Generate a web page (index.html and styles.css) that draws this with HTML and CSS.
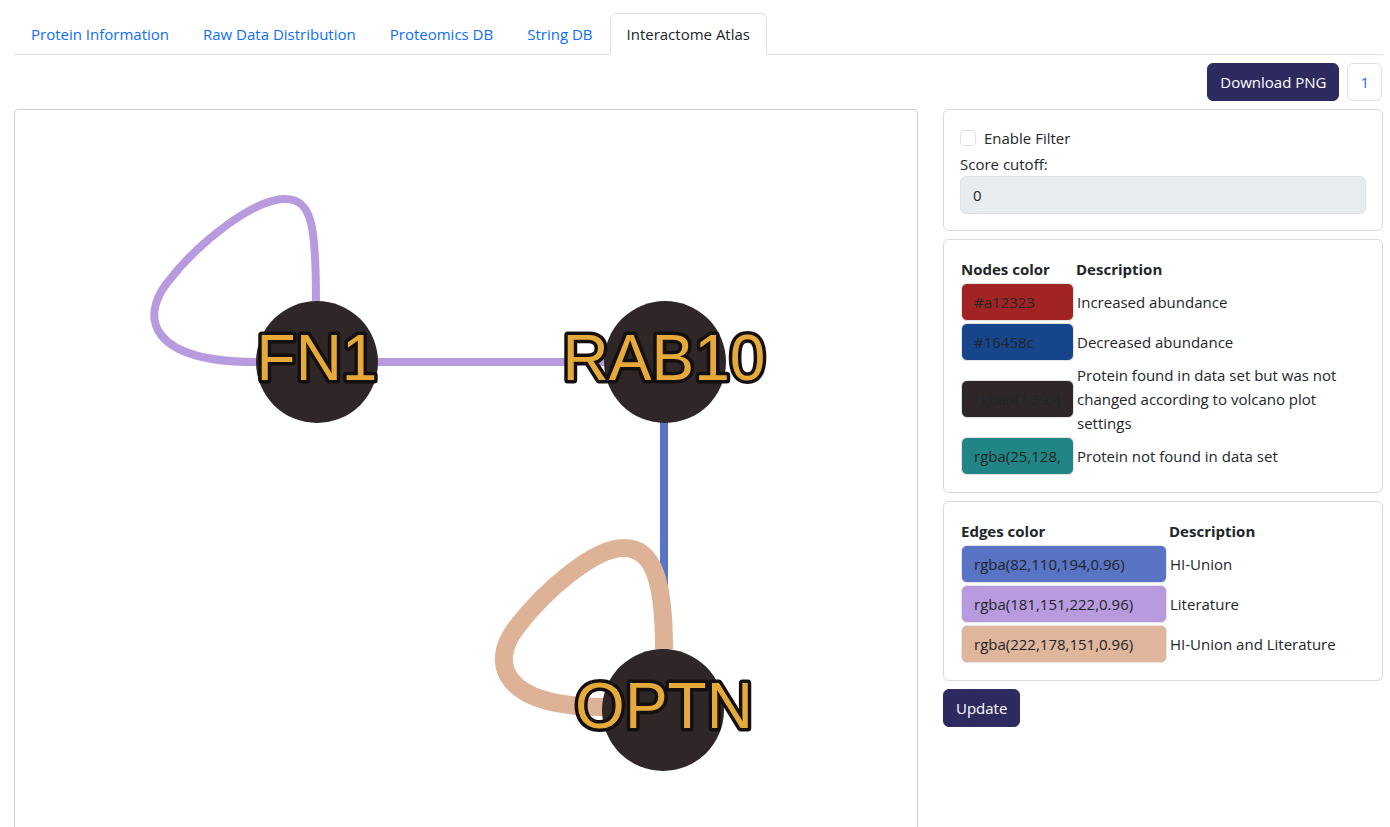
FILE: index.html
```html
<!DOCTYPE html>
<html lang="en">
<head>
<meta charset="utf-8">
<title>Interactome Atlas</title>
<link rel="stylesheet" href="styles.css">
</head>
<body>
<div class="page">
  <ul class="tabs">
    <li><a class="tab">Protein Information</a></li>
    <li><a class="tab">Raw Data Distribution</a></li>
    <li><a class="tab">Proteomics DB</a></li>
    <li><a class="tab">String DB</a></li>
    <li><a class="tab active">Interactome Atlas</a></li>
  </ul>

  <div class="toolbar">
    <button class="btn-dark">Download PNG</button>
    <span class="page-num">1</span>
  </div>

  <div class="main">
    <div class="graph-panel">
      <svg class="graph" width="902" height="728" viewBox="15 110 902 728" xmlns="http://www.w3.org/2000/svg">
        <!-- edges -->
        <path d="M 316 301 C 316 225, 312 199, 285 199 C 255 199, 200 240, 167 283 C 140 318, 150 362, 256 362" fill="none" stroke="rgba(181,151,222,0.96)" stroke-width="8"/>
        <line x1="317" y1="362" x2="664" y2="362" stroke="rgba(181,151,222,0.96)" stroke-width="8"/>
        <line x1="664" y1="362" x2="664" y2="700" stroke="rgba(82,110,194,0.96)" stroke-width="8"/>
        <path d="M 664 649 C 664 585, 655 548, 624 548 C 594 548, 545 590, 516 628 C 490 662, 500 707, 604 707" fill="none" stroke="rgb(222,178,151)" stroke-width="18"/>
        <!-- nodes -->
        <circle cx="317" cy="362" r="61" fill="#2f2727"/>
        <circle cx="665" cy="362" r="61" fill="#2f2727"/>
        <circle cx="663" cy="710" r="61" fill="#2f2727"/>
        <!-- labels -->
        <text class="node-label" x="317" y="380">FN1</text>
        <text class="node-label" x="664" y="380">RAB10</text>
        <text class="node-label" x="664" y="728">OPTN</text>
      </svg>
    </div>

    <div class="side">
      <div class="card">
        <div class="check-row">
          <span class="checkbox"></span>
          <span>Enable Filter</span>
        </div>
        <div class="field-label">Score cutoff:</div>
        <div class="input-disabled">0</div>
      </div>

      <div class="card">
        <div class="legend legend-nodes">
          <div class="cell head">Nodes color</div>
          <div class="cell head">Description</div>

          <div class="cell"><div class="swatch" style="background:#a12323">#a12323</div></div>
          <div class="cell desc">Increased abundance</div>

          <div class="cell"><div class="swatch" style="background:#16458c">#16458c</div></div>
          <div class="cell desc">Decreased abundance</div>

          <div class="cell"><div class="swatch" style="background:rgba(47,39,39,1)">rgba(47,39,4</div></div>
          <div class="cell desc">Protein found in data set but was not changed according to volcano plot settings</div>

          <div class="cell"><div class="swatch" style="background:rgba(25,128,128,0.96)">rgba(25,128,</div></div>
          <div class="cell desc">Protein not found in data set</div>
        </div>
      </div>

      <div class="card">
        <div class="legend legend-edges">
          <div class="cell head">Edges color</div>
          <div class="cell head">Description</div>

          <div class="cell"><div class="swatch" style="background:rgba(82,110,194,0.96)">rgba(82,110,194,0.96)</div></div>
          <div class="cell desc">HI-Union</div>

          <div class="cell"><div class="swatch" style="background:rgba(181,151,222,0.96)">rgba(181,151,222,0.96)</div></div>
          <div class="cell desc">Literature</div>

          <div class="cell"><div class="swatch" style="background:rgba(222,178,151,0.96)">rgba(222,178,151,0.96)</div></div>
          <div class="cell desc">HI-Union and Literature</div>
        </div>
      </div>

      <div class="actions">
        <button class="btn-dark">Update</button>
      </div>
    </div>
  </div>
</div>
</body>
</html>
```

FILE: styles.css
```css
* {
  box-sizing: border-box;
}

html, body {
  margin: 0;
  padding: 0;
  background: #fff;
  overflow: hidden;
}

body {
  font-family: "Open Sans", "Liberation Sans", sans-serif;
  font-size: 15px;
  line-height: 24px;
  color: #212529;
}

.page {
  padding: 13px 7px 0 14px;
}

/* Tabs */
.tabs {
  display: flex;
  list-style: none;
  margin: 0;
  padding: 0;
  border-bottom: 1px solid #dee2e6;
}

.tabs li {
  margin-bottom: -1px;
}

.tab {
  display: block;
  padding: 8px 16px;
  border: 1px solid transparent;
  border-radius: 6px 6px 0 0;
  color: #0d6efd;
  line-height: 24px;
  cursor: pointer;
}

.tab.active {
  color: #212529;
  background: #fff;
  border-color: #dee2e6 #dee2e6 #fff;
}

/* Toolbar */
.toolbar {
  display: flex;
  justify-content: flex-end;
  align-items: center;
  gap: 8px;
  margin-top: 8px;
  padding-right: 1px;
}

.btn-dark {
  font-family: inherit;
  font-size: 15px;
  line-height: 24px;
  height: 38px;
  padding: 6px 12px;
  border: 1px solid #2c2a5e;
  border-radius: 6px;
  background: #2c2a5e;
  color: #fff;
  cursor: pointer;
}

.page-num {
  display: inline-block;
  height: 38px;
  padding: 6px 12px;
  border: 1px solid #dee2e6;
  border-radius: 6px;
  color: #0d6efd;
  background: #fff;
}

/* Main */
.main {
  display: flex;
  gap: 25px;
  margin-top: 8px;
  align-items: flex-start;
}

.graph-panel {
  width: 904px;
  height: 730px;
  border: 1px solid #cfcfcf;
  border-radius: 4px;
  background: #fff;
  flex: none;
}

.graph {
  display: block;
}

.node-label {
  font-family: "Liberation Sans", Arial, sans-serif;
  font-size: 64px;
  text-anchor: middle;
  fill: #e5aa3a;
  stroke: #141010;
  stroke-width: 7px;
  stroke-linejoin: round;
  paint-order: stroke fill;
}

.side {
  width: 440px;
  flex: none;
}

.card {
  border: 1px solid #d9d9d9;
  border-radius: 6px;
  padding: 16px;
  margin-bottom: 8px;
  background: #fff;
}

.check-row {
  display: flex;
  align-items: center;
  gap: 8px;
  height: 24px;
  margin-bottom: 2px;
}

.checkbox {
  width: 16px;
  height: 16px;
  border: 1px solid #dee2e6;
  border-radius: 4px;
  background: #fff;
}

.field-label {
  line-height: 24px;
}

.input-disabled {
  height: 38px;
  padding: 6px 12px;
  border: 1px solid #dee2e6;
  border-radius: 6px;
  background: #e9ecef;
  color: #212529;
}

/* Legend tables */
.legend {
  display: grid;
  align-items: center;
}

.legend-nodes {
  grid-template-columns: 115px 1fr;
}

.legend-edges {
  grid-template-columns: 208px 1fr;
}

.cell {
  padding: 1px;
}

.head {
  font-weight: 700;
  line-height: 24px;
}

.desc {
  padding-left: 2px;
}

.swatch {
  height: 38px;
  padding: 0 12px;
  border: 1px solid #e3e3e3;
  border-radius: 6px;
  line-height: 36px;
  white-space: nowrap;
  overflow: hidden;
  color: #212529;
}

.actions {
  display: flex;
}
```
